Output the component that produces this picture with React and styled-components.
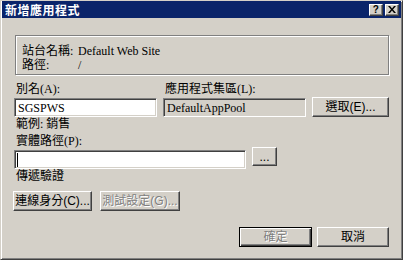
import React from 'react';
import styled, { createGlobalStyle } from 'styled-components';

const Global = createGlobalStyle`
	html, body { margin: 0; padding: 0; background: #d4d0c8; }
	* { box-sizing: border-box; }
`;

const Window = styled.div`
	width: 403px;
	height: 260px;
	background: #d4d0c8;
	border: 1px solid;
	border-color: #d4d0c8 #404040 #404040 #d4d0c8;
	box-shadow: inset 1px 1px #fff, inset -1px -1px #808080;
	padding: 0 1px 1px 1px;
	display: flex;
	flex-direction: column;
	font-family: 'Liberation Serif', 'Noto Sans CJK TC', serif;
	font-size: 12px;
	color: #000;
`;

const TitleBar = styled.div`
	height: 17px;
	background: #0a246a;
	display: flex;
	align-items: center;
	padding: 0 2px 0 3px;
	color: #fff;
	font-family: 'Noto Sans CJK TC', sans-serif;
	font-weight: bold;
	font-size: 12px;
	letter-spacing: 0.5px;
`;

const Title = styled.div`
	flex: 1;
	line-height: 17px;
`;

const TitleButton = styled.div`
	width: 14px;
	height: 12px;
	margin-left: ${p => p.gap || 0}px;
	background: #d4d0c8;
	border: 1px solid;
	border-color: #fff #404040 #404040 #fff;
	box-shadow: inset -1px -1px #808080;
	display: flex;
	align-items: center;
	justify-content: center;
	color: #000;
	font-family: 'Liberation Sans', sans-serif;
	font-size: 10px;
	font-weight: bold;
	line-height: 10px;
`;

const Body = styled.div`
	flex: 1;
	display: flex;
	flex-direction: column;
	padding: 0 12px;
`;

const GroupBox = styled.div`
	margin: 17px 0 0 1px;
	width: 374px;
	height: 40px;
	border: 1px solid #808080;
	box-shadow: inset 1px 1px #fff, 1px 1px #fff;
	padding: 8px 0 0 6px;
	display: grid;
	grid-template-columns: 56px auto;
	grid-auto-rows: 14px;
	line-height: 14px;
`;

const Label = styled.div`
	line-height: 14px;
	height: 14px;
	margin-top: ${p => p.top || 0}px;
	margin-left: ${p => p.left || 0}px;
	white-space: nowrap;
`;

const FieldGrid = styled.div`
	margin-top: 7px;
	display: grid;
	grid-template-columns: 143px 143px 77px;
	column-gap: 6px;
	grid-template-rows: 15px 20px 14px;
`;

const Field = styled.div`
	width: ${p => p.width}px;
	height: ${p => p.height || 20}px;
	margin-top: ${p => p.top || 0}px;
	background: ${p => (p.readOnly ? '#d4d0c8' : '#fff')};
	border: 1px solid;
	border-color: #808080 #fff #fff #808080;
	box-shadow: inset 1px 1px #404040, inset -1px -1px #d4d0c8;
	padding: 0 3px;
	display: flex;
	align-items: center;
	white-space: nowrap;
	line-height: 14px;
`;

const Caret = styled.span`
	display: block;
	width: 1px;
	height: 14px;
	background: #000;
	margin-left: -1px;
`;

const Button = styled.div`
	width: ${p => p.width}px;
	height: ${p => p.height || 20}px;
	margin-left: ${p => p.left || 0}px;
	margin-top: ${p => p.top || 0}px;
	background: #d4d0c8;
	border: 1px solid;
	border-color: ${p => (p.primary ? '#000' : '#fff #404040 #404040 #fff')};
	box-shadow: ${p =>
		p.primary
			? 'inset 1px 1px #fff, inset -1px -1px #404040, inset -2px -2px #808080'
			: 'inset -1px -1px #808080'};
	display: flex;
	align-items: center;
	justify-content: center;
	font-family: 'Liberation Sans', 'Noto Sans CJK TC', sans-serif;
	font-size: 12px;
	line-height: 14px;
	white-space: nowrap;
	color: ${p => (p.disabled ? '#808080' : '#000')};
	text-shadow: ${p => (p.disabled ? '1px 1px #fff' : 'none')};
`;

const Row = styled.div`
	display: flex;
	align-items: flex-start;
	margin-top: ${p => p.top || 0}px;
	margin-left: ${p => p.left || 0}px;
	justify-content: ${p => (p.end ? 'flex-end' : 'flex-start')};
`;

const CloseIcon = () => (
	<svg width="8" height="7" viewBox="0 0 8 7">
		<path d="M0 0h2l2 2.5L6 0h2L5 3.5 8 7H6L4 4.5 2 7H0l3-3.5z" fill="#000" />
	</svg>
);

export default function App() {
	return (
		<>
			<Global />
			<Window>
				<TitleBar>
					<Title>新增應用程式</Title>
					<TitleButton>?</TitleButton>
					<TitleButton gap={2}>
						<CloseIcon />
					</TitleButton>
				</TitleBar>
				<Body>
					<GroupBox>
						<div>站台名稱:</div>
						<div>Default Web Site</div>
						<div>路徑:</div>
						<div>/</div>
					</GroupBox>

					<FieldGrid>
						<Label left={2}>別名(A):</Label>
						<Label left={2}>應用程式集區(L):</Label>
						<div />
						<Field width={143} top={1} height={19}>SGSPWS</Field>
						<Field width={143} top={1} height={19} readOnly>DefaultAppPool</Field>
						<Button width={77}>選取(E)...</Button>
						<Label left={2}>範例: 銷售</Label>
					</FieldGrid>

					<Label left={2} top={3}>實體路徑(P):</Label>
					<Row>
						<Field width={232} height={19} top={2}>
							<Caret />
						</Field>
						<Button width={25} height={19} left={6} top={-1}>...</Button>
					</Row>
					<Label left={2}>傳遞驗證</Label>

					<Row top={8} left={-1}>
						<Button width={79}>連線身分(C)...</Button>
						<Button width={80} left={8} disabled>測試設定(G)...</Button>
					</Row>

					<Row top={16} end>
						<Button width={73} primary disabled>確定</Button>
						<Button width={72} left={5}>取消</Button>
					</Row>
				</Body>
			</Window>
		</>
	);
}
